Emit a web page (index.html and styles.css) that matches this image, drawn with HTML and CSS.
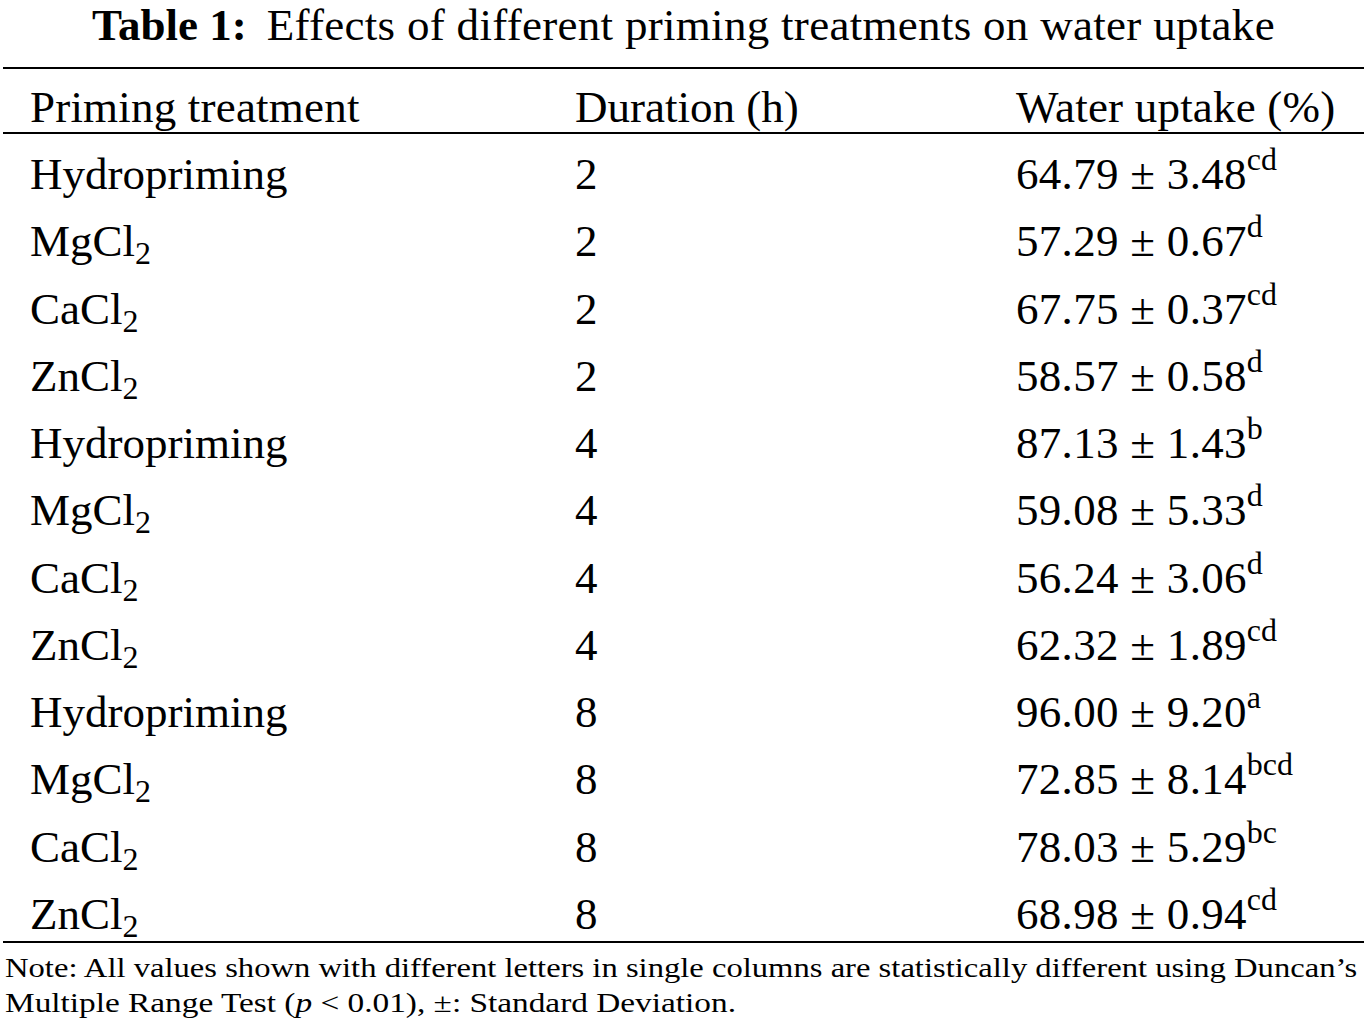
FILE: index.html
```html
<!DOCTYPE html>
<html lang="en">
<head>
<meta charset="utf-8">
<title>Table 1</title>
<link rel="stylesheet" href="styles.css">
</head>
<body>
<div class="page">
  <h1 class="caption"><span class="label">Table 1:</span><span class="caption-text">Effects of different priming treatments on water uptake</span></h1>
  <div class="table">
    <div class="row head">
      <div class="cell c1">Priming treatment</div>
      <div class="cell c2">Duration (h)</div>
      <div class="cell c3">Water uptake (%)</div>
    </div>
    <div class="body">
      <div class="row"><div class="cell c1">Hydropriming</div><div class="cell c2">2</div><div class="cell c3">64.79 ± 3.48<sup>cd</sup></div></div>
      <div class="row"><div class="cell c1">MgCl<sub>2</sub></div><div class="cell c2">2</div><div class="cell c3">57.29 ± 0.67<sup>d</sup></div></div>
      <div class="row"><div class="cell c1">CaCl<sub>2</sub></div><div class="cell c2">2</div><div class="cell c3">67.75 ± 0.37<sup>cd</sup></div></div>
      <div class="row"><div class="cell c1">ZnCl<sub>2</sub></div><div class="cell c2">2</div><div class="cell c3">58.57 ± 0.58<sup>d</sup></div></div>
      <div class="row"><div class="cell c1">Hydropriming</div><div class="cell c2">4</div><div class="cell c3">87.13 ± 1.43<sup>b</sup></div></div>
      <div class="row"><div class="cell c1">MgCl<sub>2</sub></div><div class="cell c2">4</div><div class="cell c3">59.08 ± 5.33<sup>d</sup></div></div>
      <div class="row"><div class="cell c1">CaCl<sub>2</sub></div><div class="cell c2">4</div><div class="cell c3">56.24 ± 3.06<sup>d</sup></div></div>
      <div class="row"><div class="cell c1">ZnCl<sub>2</sub></div><div class="cell c2">4</div><div class="cell c3">62.32 ± 1.89<sup>cd</sup></div></div>
      <div class="row"><div class="cell c1">Hydropriming</div><div class="cell c2">8</div><div class="cell c3">96.00 ± 9.20<sup>a</sup></div></div>
      <div class="row"><div class="cell c1">MgCl<sub>2</sub></div><div class="cell c2">8</div><div class="cell c3">72.85 ± 8.14<sup>bcd</sup></div></div>
      <div class="row"><div class="cell c1">CaCl<sub>2</sub></div><div class="cell c2">8</div><div class="cell c3">78.03 ± 5.29<sup>bc</sup></div></div>
      <div class="row"><div class="cell c1">ZnCl<sub>2</sub></div><div class="cell c2">8</div><div class="cell c3">68.98 ± 0.94<sup>cd</sup></div></div>
    </div>
  </div>
  <p class="note"><span class="note-line first">Note: All values shown with different letters in single columns are statistically different using Duncan’s</span><br><span class="note-line second">Multiple Range Test (<i>p</i> &lt; 0.01), ±: Standard Deviation.</span></p>
</div>
</body>
</html>
```

FILE: styles.css
```css
html, body {
  margin: 0;
  padding: 0;
  background: #ffffff;
}

body {
  font-family: "Liberation Serif", "Times New Roman", serif;
  color: #000000;
}

.page {
  width: 1367px;
}

.caption {
  margin: 0;
  font-size: 45px;
  font-weight: normal;
  line-height: 50px;
  text-align: center;
}

.caption .label {
  font-weight: bold;
  margin-right: 20px;
}

.caption-text {
  letter-spacing: 0.3px;
}

.table {
  margin: 17px 3px 0 3px;
  border-top: 2px solid #000;
  border-bottom: 2px solid #000;
  font-size: 45px;
}

.row {
  display: grid;
  grid-template-columns: 572px 441px 1fr;
}

.head {
  height: 63px;
  border-bottom: 2px solid #000;
}

.head .cell {
  padding-top: 13px;
  line-height: 50px;
}

.head .c1,
.head .c3 {
  letter-spacing: 0.2px;
}

.body .row {
  height: 67.25px;
}

.body .cell {
  padding-top: 14px;
  line-height: 53px;
}

.c1 {
  padding-left: 27px;
}

.c3 {
  letter-spacing: 0.3px;
}

.cell {
  white-space: nowrap;
}

sub {
  font-size: 32px;
  line-height: 0;
  vertical-align: -8px;
  letter-spacing: 0;
}

sup {
  font-size: 32px;
  line-height: 0;
  vertical-align: 19px;
  letter-spacing: 0;
}

.note {
  margin: 7px 0 0 5px;
  font-size: 28px;
  line-height: 35px;
  white-space: nowrap;
}

.note-line {
  display: inline-block;
  transform-origin: left center;
}

.note-line.first {
  transform: scaleX(1.165);
}

.note-line.second {
  transform: scaleX(1.19);
}
```
